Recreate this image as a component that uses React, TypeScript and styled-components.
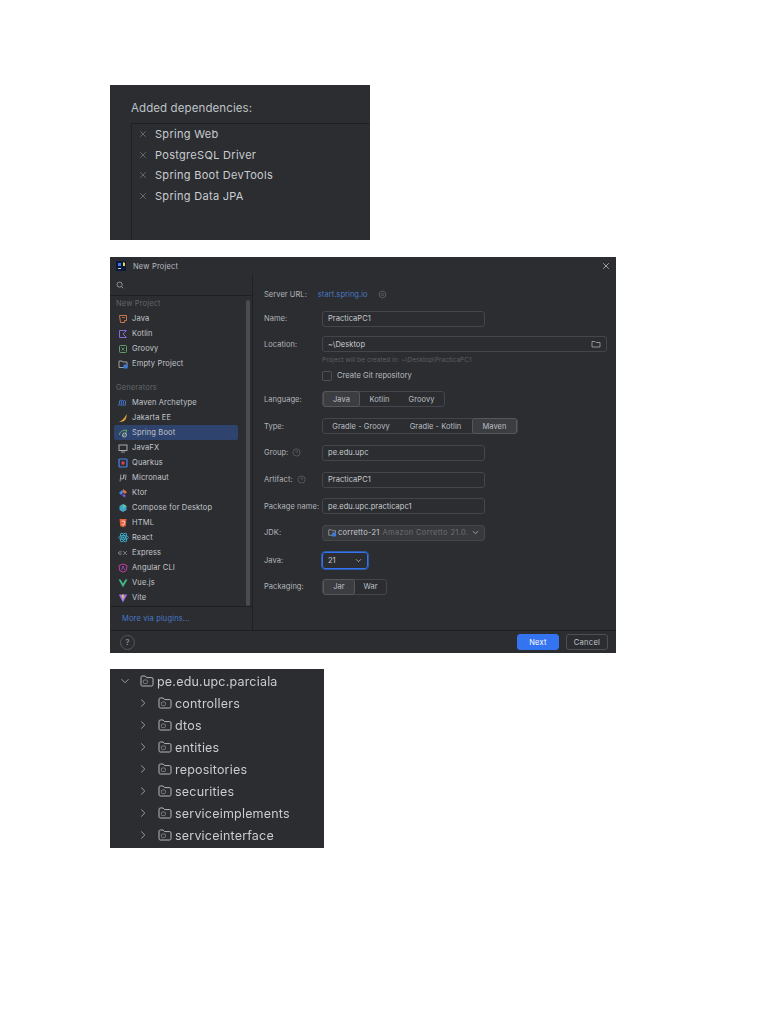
import styled, { createGlobalStyle } from "styled-components";
import { ReactNode } from "react";

const GlobalStyle = createGlobalStyle`
  body {
    margin: 0;
    background: #ffffff;
    font-family: Inter, "Liberation Sans", sans-serif;
  }
`;

const Page = styled.div`
  display: flex;
  flex-direction: column;
  align-items: flex-start;
  padding: 85px 0 0 110px;
  height: 1024px;
  box-sizing: border-box;
  filter: blur(0.35px);
`;

const Panel = styled.section<{ $w: number; $h: number; $mt?: number }>`
  width: ${(p) => p.$w}px;
  height: ${(p) => p.$h}px;
  margin-top: ${(p) => p.$mt ?? 0}px;
  background: #2b2d30;
  color: #c9ccd1;
  overflow: hidden;
  flex-shrink: 0;
`;

/* top panel */
const DepsPanel = styled(Panel)`
  padding: 16px 0 0 21px;
  box-sizing: border-box;
`;

const DepsTitle = styled.div`
  font-size: 11.5px;
  line-height: 14px;
  letter-spacing: 0.1px;
  color: #bfc2c7;
`;

const DepsBox = styled.div`
  margin-top: 8px;
  height: 130px;
  border-left: 1px solid #1f2023;
  border-top: 1px solid #1f2023;
`;

const DepRow = styled.div`
  display: flex;
  align-items: center;
  height: 20.6px;
  padding-left: 7px;
  font-size: 11px;
  letter-spacing: 0.3px;
`;

const DepRemove = styled.span`
  display: flex;
  width: 16px;
  color: #73767b;
`;

/* dialog */
const TitleBar = styled.div`
  display: flex;
  align-items: center;
  height: 18px;
  padding: 0 6px;
  font-size: 7.5px;
  letter-spacing: 0.2px;
  color: #b9bcc1;
`;

const TitleLogo = styled.span`
  display: flex;
  margin-right: 7px;
`;

const TitleText = styled.span`
  flex: 1;
`;

const DialogBody = styled.div`
  display: flex;
  height: 355px;
`;

const Sidebar = styled.aside`
  width: 142px;
  flex-shrink: 0;
  border-right: 1px solid #1f2023;
  display: flex;
  flex-direction: column;
`;

const SearchRow = styled.div`
  display: flex;
  align-items: center;
  height: 21px;
  padding-left: 6px;
  border-bottom: 1px solid #1f2023;
  box-sizing: border-box;
  color: #a8abb0;
`;

const ListArea = styled.div`
  display: flex;
  height: 311px;
  border-bottom: 1px solid #1f2023;
  box-sizing: border-box;
`;

const List = styled.div`
  flex: 1;
  padding-left: 4px;
  font-size: 7.5px;
  letter-spacing: 0.15px;
`;

const Thumb = styled.div`
  width: 4px;
  margin: 4px 2px 0 0;
  background: #4a4c50;
  border-radius: 2px;
`;

const GroupLabel = styled.div<{ $mt?: number }>`
  height: 15px;
  margin-top: ${(p) => p.$mt ?? 0}px;
  line-height: 15px;
  padding-left: 2px;
  color: #62656a;
`;

const Item = styled.div<{ $active?: boolean }>`
  display: flex;
  align-items: center;
  height: 15px;
  width: 124px;
  border-radius: 2px;
  color: #c4c7cc;
  background: ${(p) => (p.$active ? "#2e436e" : "transparent")};
`;

const ItemIcon = styled.span`
  display: flex;
  justify-content: center;
  width: 18px;
`;

const PluginsLink = styled.a`
  display: block;
  padding: 7px 0 0 12px;
  font-size: 7.5px;
  letter-spacing: 0.15px;
  color: #4a78c8;
`;

const FormArea = styled.div`
  flex: 1;
  padding: 11px 9px 0 11px;
  font-size: 7.5px;
  letter-spacing: 0.05px;
`;

const Row = styled.div<{ $mt?: number }>`
  display: flex;
  align-items: center;
  min-height: 16px;
  margin-top: ${(p) => p.$mt ?? 10.7}px;
`;

const Label = styled.div`
  display: flex;
  align-items: center;
  gap: 4px;
  width: 58px;
  flex-shrink: 0;
  color: #b3b6bb;
`;

const UrlLabel = styled(Label)`
  width: auto;
  margin-right: 11px;
`;

const Field = styled.div<{ $w?: number; $disabled?: boolean; $focus?: boolean }>`
  display: flex;
  align-items: center;
  justify-content: space-between;
  box-sizing: border-box;
  flex: ${(p) => (p.$w ? "none" : 1)};
  width: ${(p) => (p.$w ? `${p.$w}px` : "auto")};
  height: ${(p) => (p.$focus ? 17 : 16)}px;
  padding: 0 5px;
  border-radius: 3px;
  border: 1px solid ${(p) => (p.$focus ? "#3574f0" : "#44464b")};
  outline: ${(p) => (p.$focus ? "1px solid #2c5aa8" : "none")};
  background: ${(p) => (p.$disabled ? "#38393d" : "transparent")};
  color: #c9ccd1;
`;

const FieldValue = styled.span`
  display: flex;
  align-items: center;
  gap: 1px;
  letter-spacing: 0.25px;
  white-space: nowrap;
`;

const Muted = styled.span`
  color: #6c6f74;
  margin-left: 2px;
  letter-spacing: 0.35px;
`;

const Hint = styled.div`
  margin: 3px 0 0 58px;
  height: 10px;
  line-height: 10px;
  font-size: 6.4px;
  color: #5c5f64;
`;

const CheckRow = styled.div`
  display: flex;
  align-items: center;
  gap: 5px;
  margin: 5px 0 0 58px;
  height: 11px;
  color: #b9bcc1;
`;

const CheckBox = styled.span`
  width: 10px;
  height: 10px;
  box-sizing: border-box;
  border: 1px solid #4e5055;
  border-radius: 2px;
`;

const Segments = styled.div`
  display: flex;
  height: 16px;
  border: 1px solid #44464b;
  border-radius: 3px;
  box-sizing: border-box;
`;

const Segment = styled.div<{ $w: number; $on?: boolean }>`
  display: flex;
  align-items: center;
  justify-content: center;
  width: ${(p) => p.$w}px;
  height: 16px;
  margin-top: -1px;
  box-sizing: border-box;
  border-radius: 3px;
  color: #bcbfc4;
  background: ${(p) => (p.$on ? "#3b3d41" : "transparent")};
  border: 1px solid ${(p) => (p.$on ? "#55575c" : "transparent")};
`;

const LinkText = styled.span`
  color: #4a78c8;
  margin-right: 10px;
`;

const HelpDot = styled.span`
  display: flex;
  color: #6c6f74;
`;

const DialogFooter = styled.div`
  display: flex;
  align-items: center;
  justify-content: space-between;
  height: 23px;
  padding: 0 8px 0 10px;
  border-top: 1px solid #1f2023;
  box-sizing: border-box;
`;

const FooterActions = styled.div`
  display: flex;
  gap: 7px;
`;

const Button = styled.button<{ $primary?: boolean }>`
  width: 42px;
  height: 16px;
  padding: 0;
  font-family: inherit;
  font-size: 7.5px;
  letter-spacing: 0.3px;
  border-radius: 3px;
  color: ${(p) => (p.$primary ? "#ffffff" : "#c4c7cc")};
  background: ${(p) => (p.$primary ? "#3574f0" : "transparent")};
  border: 1px solid ${(p) => (p.$primary ? "#3574f0" : "#4e5055")};
`;

const HelpButton = styled.span`
  display: flex;
  align-items: center;
  justify-content: center;
  width: 13px;
  height: 13px;
  border-radius: 50%;
  border: 1px solid #55575c;
  font-size: 7.5px;
  color: #a8abb0;
`;

/* package tree */
const TreePanel = styled(Panel)`
  padding-top: 1px;
  box-sizing: border-box;
`;

const TreeRow = styled.div<{ $depth: number }>`
  display: flex;
  align-items: center;
  height: 22px;
  padding-left: ${(p) => 10 + p.$depth * 18}px;
  font-size: 12.5px;
  letter-spacing: 0.2px;
  color: #c9ccd1;
`;

const TreeArrow = styled.span`
  display: flex;
  width: 20px;
  color: #9a9da2;
`;

const TreeFolder = styled.span`
  display: flex;
  margin-right: 3px;
`;

const Svg = ({ s = 10, children }: { s?: number; children: ReactNode }) => (
  <svg width={s} height={s} viewBox="0 0 10 10" fill="none">
    {children}
  </svg>
);

const Cross = () => (
  <Svg s={8}>
    <path d="M1.5 1.5l7 7M8.5 1.5l-7 7" stroke="currentColor" strokeWidth="1" />
  </Svg>
);

const Chevron = ({ open, s = 10 }: { open?: boolean; s?: number }) => (
  <Svg s={s}>
    <path
      d={open ? "M1.5 3.2L5 6.8l3.5-3.6" : "M3.2 1.5L6.8 5 3.2 8.5"}
      stroke="currentColor"
      strokeWidth="1"
    />
  </Svg>
);

const Folder = ({ s = 14 }: { s?: number }) => (
  <svg width={s} height={s} viewBox="0 0 14 14" fill="none">
    <path
      d="M1 3.2c0-.7.5-1.2 1.2-1.2h3l1.4 1.6h5.2c.7 0 1.2.5 1.2 1.2v6c0 .7-.5 1.2-1.2 1.2H2.2c-.7 0-1.2-.5-1.2-1.2z"
      stroke="#b4b7bc"
      strokeWidth="1"
    />
    <rect x="3.4" y="6" width="4" height="3.6" rx="1" stroke="#8f9297" strokeWidth="0.8" />
  </svg>
);

const Help = () => (
  <Svg s={9}>
    <circle cx="5" cy="5" r="4" stroke="currentColor" strokeWidth="0.7" />
    <path d="M3.8 4c.2-1.2 2.4-1.2 2.4.1 0 .8-1.2.9-1.2 1.7" stroke="currentColor" strokeWidth="0.7" />
  </Svg>
);

const icons: Record<string, ReactNode> = {
  java: (
    <Svg>
      <path d="M1.5 1.5h7v5h-2v2h-4z" stroke="#c9764a" strokeWidth="1" />
      <path d="M4 3.5h3" stroke="#c9764a" strokeWidth="0.8" />
    </Svg>
  ),
  kotlin: (
    <Svg>
      <path d="M1.5 1.5h7L5 5l3.5 3.5h-7z" stroke="#8a68d8" strokeWidth="1" />
    </Svg>
  ),
  groovy: (
    <Svg>
      <rect x="1.5" y="1.5" width="7" height="7" rx="1" stroke="#5f9e6a" strokeWidth="1" />
      <path d="M3.5 3.5l3 3M6.5 3.5l-3 3" stroke="#5f9e6a" strokeWidth="0.8" />
    </Svg>
  ),
  empty: (
    <Svg>
      <path d="M1 2h3l1 1h4v5.5H1z" stroke="#a9acb1" strokeWidth="0.9" />
      <rect x="5.5" y="5.5" width="4" height="4" fill="#3f78d8" />
    </Svg>
  ),
  maven: (
    <Svg>
      <path d="M.8 8l1-5.500c1-.6 1.800-.2 1.700.8L3 8M3.600 3c1-.9 2-.5 1.900.6L5 8M5.600 3c1-.9 2.100-.5 2 .6L7 8" stroke="#4c7fe0" strokeWidth="0.9" />
    </Svg>
  ),
  jakarta: (
    <Svg>
      <path d="M1 8.500C4 8 7 5 8.500 1c.6 3-1 7-4 7.500-1.500.3-2.500.3-3.500 0z" fill="#e8a83c" />
    </Svg>
  ),
  spring: (
    <Svg>
      <path d="M1.500 7C1.500 3.500 5 2 8.500 2 8.500 5 7 8 4 8" stroke="#6cae5b" strokeWidth="1" />
      <circle cx="6.500" cy="7" r="2" stroke="#c9ccd1" strokeWidth="0.8" />
    </Svg>
  ),
  javafx: (
    <Svg>
      <rect x="1" y="2" width="8" height="5.500" stroke="#b4b7bc" strokeWidth="0.9" />
      <path d="M3 9h4" stroke="#b4b7bc" strokeWidth="0.8" />
    </Svg>
  ),
  quarkus: (
    <Svg>
      <rect x="1" y="1" width="8" height="8" rx="1" stroke="#4a86e8" strokeWidth="1.2" />
      <rect x="3.500" y="3.500" width="3" height="3" fill="#e0405a" />
    </Svg>
  ),
  micronaut: (
    <Svg>
      <path d="M3 1.500L2 8.500M3 5c0 1.500 2 1.500 2.500 0L6 1.500M6 1.500L5.500 6M8 1.500L7.500 7" stroke="#b4b7bc" strokeWidth="0.8" />
    </Svg>
  ),
  ktor: (
    <Svg>
      <path d="M1 5l3-3 2 2-3 3z" fill="#3f88e8" />
      <path d="M5 1l4 3-2 2-2-2z" fill="#e8703c" />
      <path d="M4 7l2-1 2 2-2 1.500z" fill="#8a4fd8" />
    </Svg>
  ),
  compose: (
    <Svg>
      <path d="M5 1l3.500 2v4L5 9 1.500 7V3z" fill="#3fa8c8" />
      <path d="M5 1l3.500 2L5 5z" fill="#6cc48a" />
    </Svg>
  ),
  html: (
    <Svg>
      <path d="M1.500 1h7l-.7 7L5 9.200 2.200 8z" fill="#e2613a" />
      <path d="M3.500 3.200h3l-.3 3.300L5 7l-1.200-.5" stroke="#fff" strokeWidth="0.7" />
    </Svg>
  ),
  react: (
    <Svg s={11}>
      <ellipse cx="5" cy="5" rx="4.500" ry="1.800" stroke="#3fb8d8" strokeWidth="0.7" />
      <ellipse cx="5" cy="5" rx="4.500" ry="1.800" stroke="#3fb8d8" strokeWidth="0.7" transform="rotate(60 5 5)" />
      <ellipse cx="5" cy="5" rx="4.500" ry="1.800" stroke="#3fb8d8" strokeWidth="0.7" transform="rotate(120 5 5)" />
      <circle cx="5" cy="5" r="1" fill="#3fb8d8" />
    </Svg>
  ),
  express: (
    <Svg>
      <path d="M.5 5h3M3.500 3.500C2 2.800.8 3.500.5 5c0 1.500 1.800 2.300 3 1.200M5 3l4 4M9 3L5 7" stroke="#8a8d92" strokeWidth="0.8" />
    </Svg>
  ),
  angular: (
    <Svg>
      <path d="M5 1l4 1.500-.7 5L5 9.200 1.700 7.500 1 2.500z" stroke="#c83c9a" strokeWidth="1" />
      <path d="M3.500 7L5 3l1.500 4" stroke="#a04ad8" strokeWidth="0.8" />
    </Svg>
  ),
  vue: (
    <Svg>
      <path d="M.5 1.500h2.200L5 5.500l2.300-4h2.200L5 9.200z" fill="#42b883" />
    </Svg>
  ),
  vite: (
    <Svg>
      <path d="M.8 1.500h8.400L5 9.500z" fill="#9a6cf0" />
      <path d="M5.800 1L3.500 2.200 4.600 5 4 7.500 6.500 3.500H5.200z" fill="#f5c842" />
    </Svg>
  ),
};

const topItems = [
  { id: "java", name: "Java" },
  { id: "kotlin", name: "Kotlin" },
  { id: "groovy", name: "Groovy" },
  { id: "empty", name: "Empty Project" },
];

const generators = [
  { id: "maven", name: "Maven Archetype" },
  { id: "jakarta", name: "Jakarta EE" },
  { id: "spring", name: "Spring Boot" },
  { id: "javafx", name: "JavaFX" },
  { id: "quarkus", name: "Quarkus" },
  { id: "micronaut", name: "Micronaut" },
  { id: "ktor", name: "Ktor" },
  { id: "compose", name: "Compose for Desktop" },
  { id: "html", name: "HTML" },
  { id: "react", name: "React" },
  { id: "express", name: "Express" },
  { id: "angular", name: "Angular CLI" },
  { id: "vue", name: "Vue.js" },
  { id: "vite", name: "Vite" },
];

const deps = ["Spring Web", "PostgreSQL Driver", "Spring Boot DevTools", "Spring Data JPA"];

const packages = [
  "controllers",
  "dtos",
  "entities",
  "repositories",
  "securities",
  "serviceimplements",
  "serviceinterface",
];

export default function App() {
  return (
    <>
      <GlobalStyle />
      <Page>
        <DepsPanel $w={260} $h={155}>
          <DepsTitle>Added dependencies:</DepsTitle>
          <DepsBox>
            {deps.map((d) => (
              <DepRow key={d}>
                <DepRemove>
                  <Cross />
                </DepRemove>
                {d}
              </DepRow>
            ))}
          </DepsBox>
        </DepsPanel>

        <Panel $w={506} $h={396} $mt={17}>
          <TitleBar>
            <TitleLogo>
              <svg width="10" height="10" viewBox="0 0 10 10">
                <rect width="10" height="10" fill="#0b1a3a" />
                <path d="M2 2h3v3H2z" fill="#3f78e8" />
                <path d="M2 7.500h3" stroke="#fff" strokeWidth="0.8" />
                <path d="M7 1l2 1v3H7z" fill="#f0d040" />
              </svg>
            </TitleLogo>
            <TitleText>New Project</TitleText>
            <Cross />
          </TitleBar>

          <DialogBody>
            <Sidebar>
              <SearchRow>
                <Svg s={8}>
                  <circle cx="4.500" cy="4.500" r="3.200" stroke="currentColor" strokeWidth="1" />
                  <path d="M7 7l2 2" stroke="currentColor" strokeWidth="1" />
                </Svg>
              </SearchRow>
              <ListArea>
                <List>
                  <GroupLabel>New Project</GroupLabel>
                  {topItems.map((i) => (
                    <Item key={i.id}>
                      <ItemIcon>{icons[i.id]}</ItemIcon>
                      {i.name}
                    </Item>
                  ))}
                  <GroupLabel $mt={9}>Generators</GroupLabel>
                  {generators.map((i) => (
                    <Item key={i.id} $active={i.id === "spring"}>
                      <ItemIcon>{icons[i.id]}</ItemIcon>
                      {i.name}
                    </Item>
                  ))}
                </List>
                <Thumb />
              </ListArea>
              <PluginsLink>More via plugins...</PluginsLink>
            </Sidebar>

            <FormArea>
              <Row $mt={0}>
                <UrlLabel>Server URL:</UrlLabel>
                <LinkText>start.spring.io</LinkText>
                <HelpDot>
                  <Svg s={9}>
                    <path d="M5 1l3.500 2v4L5 9 1.500 7V3z" stroke="currentColor" strokeWidth="0.8" />
                    <circle cx="5" cy="5" r="1.300" stroke="currentColor" strokeWidth="0.7" />
                  </Svg>
                </HelpDot>
              </Row>
              <Row $mt={8.5}>
                <Label>Name:</Label>
                <Field $w={163}>PracticaPC1</Field>
              </Row>
              <Row $mt={9.7}>
                <Label>Location:</Label>
                <Field>
                  ~\Desktop
                  <Svg s={10}>
                    <path d="M1 2.500h3l1 1h4v4.500H1z" stroke="#a8abb0" strokeWidth="0.8" />
                  </Svg>
                </Field>
              </Row>
              <Hint>Project will be created in: ~\Desktop\PracticaPC1</Hint>
              <CheckRow>
                <CheckBox />
                Create Git repository
              </CheckRow>
              <Row $mt={10}>
                <Label>Language:</Label>
                <Segments>
                  <Segment $w={37} $on>Java</Segment>
                  <Segment $w={39}>Kotlin</Segment>
                  <Segment $w={45}>Groovy</Segment>
                </Segments>
              </Row>
              <Row $mt={11}>
                <Label>Type:</Label>
                <Segments>
                  <Segment $w={76}>Gradle - Groovy</Segment>
                  <Segment $w={73}>Gradle - Kotlin</Segment>
                  <Segment $w={45} $on>Maven</Segment>
                </Segments>
              </Row>
              <Row>
                <Label>
                  Group:
                  <HelpDot>
                    <Help />
                  </HelpDot>
                </Label>
                <Field $w={163}>pe.edu.upc</Field>
              </Row>
              <Row>
                <Label>
                  Artifact:
                  <HelpDot>
                    <Help />
                  </HelpDot>
                </Label>
                <Field $w={163}>PracticaPC1</Field>
              </Row>
              <Row>
                <Label>Package name:</Label>
                <Field $w={163}>pe.edu.upc.practicapc1</Field>
              </Row>
              <Row>
                <Label>JDK:</Label>
                <Field $w={163} $disabled>
                  <FieldValue>
                    <Svg s={9}>
                      <path d="M.8 2h3l1 1h3.500v5H.8z" stroke="#a8abb0" strokeWidth="0.8" />
                      <rect x="4.500" y="5" width="4.500" height="4.500" rx="1" fill="#3f78d8" />
                    </Svg>
                    corretto-21 <Muted>Amazon Corretto 21.0.</Muted>
                  </FieldValue>
                  <Chevron open s={7} />
                </Field>
              </Row>
              <Row>
                <Label>Java:</Label>
                <Field $w={46} $focus>
                  21
                  <Chevron open s={7} />
                </Field>
              </Row>
              <Row $mt={10}>
                <Label>Packaging:</Label>
                <Segments>
                  <Segment $w={32} $on>Jar</Segment>
                  <Segment $w={31}>War</Segment>
                </Segments>
              </Row>
            </FormArea>
          </DialogBody>

          <DialogFooter>
            <HelpButton>?</HelpButton>
            <FooterActions>
              <Button $primary>Next</Button>
              <Button>Cancel</Button>
            </FooterActions>
          </DialogFooter>
        </Panel>

        <TreePanel $w={214} $h={179} $mt={16}>
          <TreeRow $depth={0}>
            <TreeArrow>
              <Chevron open />
            </TreeArrow>
            <TreeFolder>
              <Folder />
            </TreeFolder>
            pe.edu.upc.parciala
          </TreeRow>
          {packages.map((p) => (
            <TreeRow key={p} $depth={1}>
              <TreeArrow>
                <Chevron />
              </TreeArrow>
              <TreeFolder>
                <Folder />
              </TreeFolder>
              {p}
            </TreeRow>
          ))}
        </TreePanel>
      </Page>
    </>
  );
}
